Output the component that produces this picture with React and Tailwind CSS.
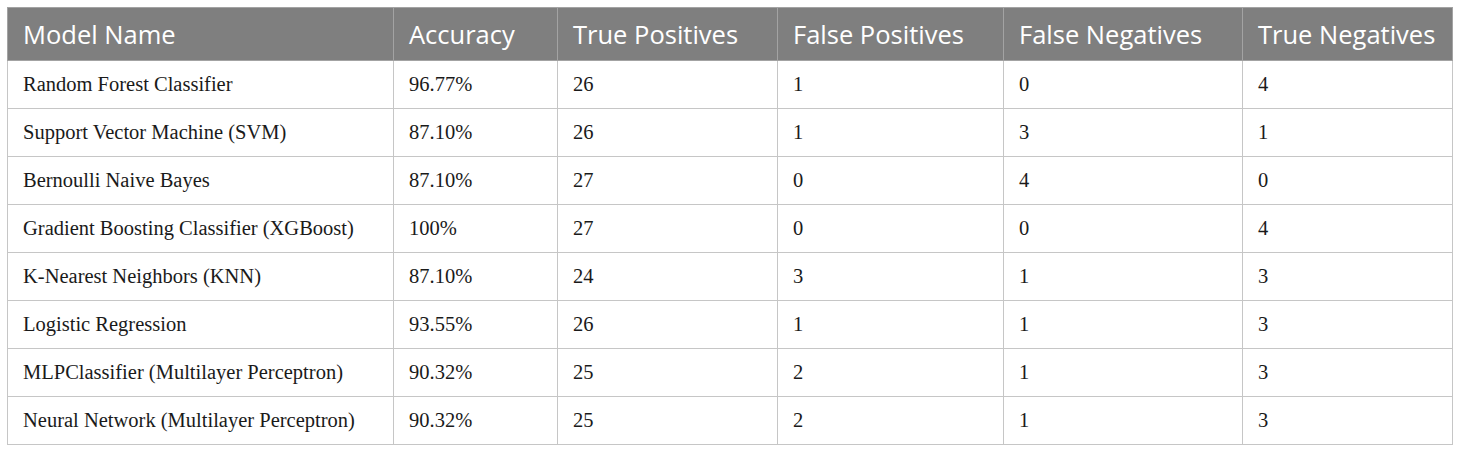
const rows = [
  ["Random Forest Classifier", "96.77%", "26", "1", "0", "4"],
  ["Support Vector Machine (SVM)", "87.10%", "26", "1", "3", "1"],
  ["Bernoulli Naive Bayes", "87.10%", "27", "0", "4", "0"],
  ["Gradient Boosting Classifier (XGBoost)", "100%", "27", "0", "0", "4"],
  ["K-Nearest Neighbors (KNN)", "87.10%", "24", "3", "1", "3"],
  ["Logistic Regression", "93.55%", "26", "1", "1", "3"],
  ["MLPClassifier (Multilayer Perceptron)", "90.32%", "25", "2", "1", "3"],
  ["Neural Network (Multilayer Perceptron)", "90.32%", "25", "2", "1", "3"],
];

const headers = [
  "Model Name",
  "Accuracy",
  "True Positives",
  "False Positives",
  "False Negatives",
  "True Negatives",
];

const widths = ["w-[386px]", "w-[164px]", "w-[220px]", "w-[226px]", "w-[239px]", "w-[210px]"];

export default function App() {
  return (
    <div className="bg-white w-[1460px] h-[453px] pt-[7px] pl-[7px]">
      <table className="border-collapse table-fixed w-[1445px] border border-[#c6c6c6]">
        <thead>
          <tr className="bg-[#7f7f7f] h-[53px]">
            {headers.map((h, i) => (
              <th
                key={h}
                className={`${widths[i]} border border-[#a3a3a3] text-left font-normal text-white text-[25.5px] px-[15px] pt-[1px] whitespace-nowrap font-['Open_Sans',sans-serif]`}
              >
                {h}
              </th>
            ))}
          </tr>
        </thead>
        <tbody>
          {rows.map((r) => (
            <tr key={r[0]} className="h-[48px]">
              {r.map((c, i) => (
                <td
                  key={i}
                  className="border border-[#c6c6c6] px-[15px] text-[20.5px] text-[#1a1a1a] font-['Liberation_Serif',serif]"
                >
                  {c}
                </td>
              ))}
            </tr>
          ))}
        </tbody>
      </table>
    </div>
  );
}
